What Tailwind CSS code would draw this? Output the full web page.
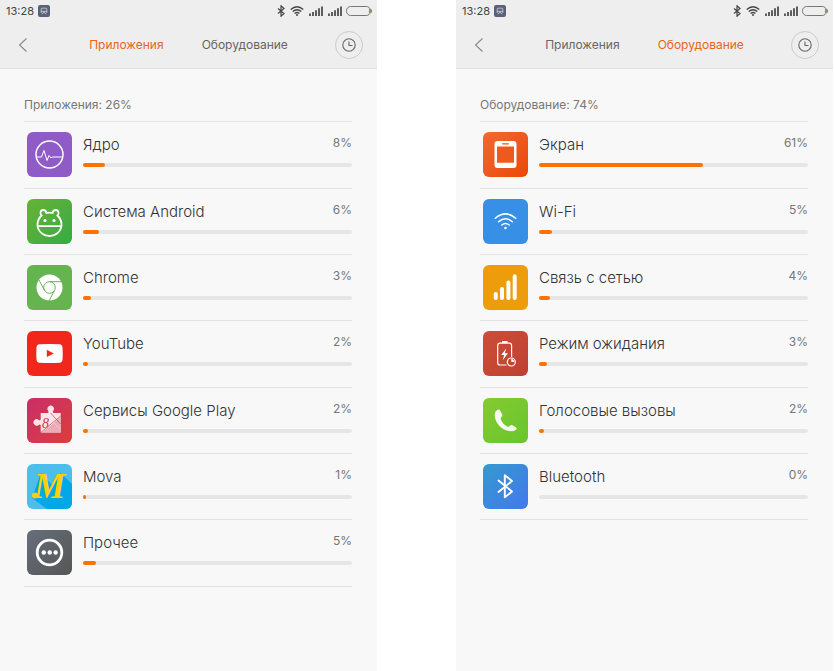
<!DOCTYPE html>
<html lang="ru">
<head>
    <meta charset="UTF-8">
    <meta name="viewport" content="width=device-width, initial-scale=1.0">
    <title>Расход заряда</title>
    <script src="https://cdn.jsdelivr.net/npm/@tailwindcss/browser@4"></script>
</head>
<body class="bg-white font-['Inter','Noto_Sans',sans-serif] text-[#333]">
    <!-- Shared icons -->
    <svg class="hidden" aria-hidden="true">
        <symbol id="i-app" viewBox="0 0 12 12">
            <rect width="12" height="12" rx="2" fill="#596178"/>
            <path d="M3.200 8V4.200q0-1 1-1h3.600q1 0 1 1V8M3.200 6.300h5.600M4 9.300l2-2.500 2 2.500" fill="none" stroke="#d5d8e0" stroke-width=".8"/>
        </symbol>
        <symbol id="i-bt" viewBox="0 0 8 12">
            <path d="M1 3.500l6 5L4 11.200V.8l3 2.700-6 5" fill="none" stroke="#444" stroke-width="1.200"/>
        </symbol>
        <symbol id="i-wifi" viewBox="0 0 14 10">
            <path d="M.7 3.600Q7-2 13.300 3.600M2.700 5.600q4.300-3.700 8.600 0M4.600 7.500q2.400-2 4.800 0" fill="none" stroke="#444" stroke-width="1.300"/>
            <circle cx="7" cy="9" r="1" fill="#444"/>
        </symbol>
        <symbol id="i-signal" viewBox="0 0 14 10">
            <path d="M1 7.500V10M4 6v4M7 4.200V10M10 2.300V10M13 .5V10" fill="none" stroke="#444" stroke-width="1.700"/>
        </symbol>
        <symbol id="i-battery" viewBox="0 0 26 10">
            <rect x=".5" y=".5" width="24" height="9" rx="4.200" fill="none" stroke="#777"/>
            <path d="M23.500 3v4" stroke="#e66" stroke-width="1.200"/>
            <path d="M25.400 3.500v3" stroke="#777"/>
        </symbol>
        <symbol id="i-back" viewBox="0 0 10 16">
            <path d="M8.500 1.500L1.500 8l7 6.500" fill="none" stroke="#888" stroke-width="1.100"/>
        </symbol>
        <symbol id="i-clock" viewBox="0 0 14 14">
            <circle cx="7" cy="7" r="6.200" fill="none" stroke="#666" stroke-width="1.100"/>
            <path d="M7 3.500V7.500h3.500" fill="none" stroke="#666" stroke-width="1.100"/>
        </symbol>
    </svg>

    <div class="grid min-h-screen grid-cols-2 gap-x-[79px] pr-px">
        <!-- Apps -->
        <main class="bg-[#f8f8f8]">
            <header class="border-b border-[#dfdfdf] bg-[#eee]">
                <div class="flex h-[22px] items-center pr-[5px] pl-[6px]">
                    <span class="text-[11px] leading-4 text-[#444]">13:28</span>
                    <svg class="ml-1 size-3"><use href="#i-app"/></svg>
                    <svg class="ml-auto h-3 w-2"><use href="#i-bt"/></svg>
                    <svg class="ml-[5px] h-2.5 w-3.5"><use href="#i-wifi"/></svg>
                    <svg class="ml-[5px] h-2.5 w-3.5"><use href="#i-signal"/></svg>
                    <svg class="ml-[5px] h-2.5 w-3.5"><use href="#i-signal"/></svg>
                    <svg class="ml-1 h-2.5 w-[26px]"><use href="#i-battery"/></svg>
                </div>
                <nav class="flex h-[46px] items-center justify-between px-3.5">
                    <button class="flex size-7 items-center pl-1" aria-label="Назад"><svg class="h-4 w-2.5"><use href="#i-back"/></svg></button>
                    <div class="flex gap-[38px] text-xs leading-5">
                        <button class="text-[#e8651a]">Приложения</button>
                        <button class="text-[#666]">Оборудование</button>
                    </div>
                    <button class="flex size-7 items-center justify-center rounded-full border border-[#ccc]" aria-label="История"><svg class="size-3.5"><use href="#i-clock"/></svg></button>
                </nav>
            </header>
            <section class="pr-[25px] pl-6">
                <h2 class="border-b border-[#e4e4e4] pt-[26px] pb-1.5 text-xs leading-5 text-[#777]">Приложения: 26%</h2>
                <ul>
                    <li class="flex gap-[11px] border-b border-[#e4e4e4] py-2.5 pl-[3px] nth-[3n+1]:pb-[11px]">
                        <svg class="size-[45px] shrink-0 rounded-md bg-[#8f5bc6]" viewBox="0 0 45 45" fill="none" stroke="#fff">
                            <circle cx="22.500" cy="22.500" r="13.500" stroke-width="1.500"/>
                            <path d="M9 25h5.500L17 18.500l3 10 2-5 2.200 2.500 1-1H36" stroke-width="1"/>
                        </svg>
                        <div class="flex-1">
                            <div class="flex justify-between pt-px">
                                <span class="text-[15px] leading-6 font-light">Ядро</span>
                                <span class="text-xs leading-5 text-[#777]">8%</span>
                            </div>
                            <div class="mt-1.5 h-1 rounded-full bg-[#e6e6e6]"><div class="h-1 rounded-full bg-[#ff7200]" style="width: 8%"></div></div>
                        </div>
                    </li>
                    <li class="flex gap-[11px] border-b border-[#e4e4e4] py-2.5 pl-[3px] nth-[3n+1]:pb-[11px]">
                        <svg class="size-[45px] shrink-0 rounded-md bg-linear-to-br from-[#67b236] to-[#32ab43]" viewBox="0 0 45 45" fill="none" stroke="#fff" stroke-width="1.800">
                            <path d="M14.500 16.500C12.500 15 13.500 11 16 11c2 0 3.200 1.200 3.500 3q3-.8 6 0c.3-1.800 1.500-3 3.500-3 2.500 0 3.500 4 1.500 5.500q4 4 4 9c0 6.500-5.300 11.500-12 11.500s-12-5-12-11.500q0-5 4-9zM11 27.200h23"/>
                            <g fill="#fff" stroke="none"><circle cx="18" cy="21.500" r="1.600"/><circle cx="27" cy="21.500" r="1.600"/></g>
                        </svg>
                        <div class="flex-1">
                            <div class="flex justify-between pt-px">
                                <span class="text-[15px] leading-6 font-light">Система Android</span>
                                <span class="text-xs leading-5 text-[#777]">6%</span>
                            </div>
                            <div class="mt-1.5 h-1 rounded-full bg-[#e6e6e6]"><div class="h-1 rounded-full bg-[#ff7200]" style="width: 6%"></div></div>
                        </div>
                    </li>
                    <li class="flex gap-[11px] border-b border-[#e4e4e4] py-2.5 pl-[3px] nth-[3n+1]:pb-[11px]">
                        <svg class="size-[45px] shrink-0 rounded-md bg-[#65b44f]" viewBox="0 0 45 45" fill="none" stroke="#65b44f">
                            <circle cx="22.500" cy="22.500" r="13" fill="#fff" stroke="none"/>
                            <circle cx="22.500" cy="22.500" r="5.800"/>
                            <path d="M22.500 16.700h12M12 15l5.500 10.400M27.500 25.400L22 36"/>
                        </svg>
                        <div class="flex-1">
                            <div class="flex justify-between pt-px">
                                <span class="text-[15px] leading-6 font-light">Chrome</span>
                                <span class="text-xs leading-5 text-[#777]">3%</span>
                            </div>
                            <div class="mt-1.5 h-1 rounded-full bg-[#e6e6e6]"><div class="h-1 rounded-full bg-[#ff7200]" style="width: 3%"></div></div>
                        </div>
                    </li>
                    <li class="flex gap-[11px] border-b border-[#e4e4e4] py-2.5 pl-[3px] nth-[3n+1]:pb-[11px]">
                        <svg class="size-[45px] shrink-0 rounded-md bg-[#f1271b]" viewBox="0 0 45 45">
                            <path d="M12.500 13.300q10-.8 20 0 3 .2 3 3.200.5 6 0 12 0 3-3 3.200-10 .6-20 0-3-.2-3-3.200-.5-6 0-12 0-3 3-3.200z" fill="#fff"/>
                            <path d="M19.800 18.800v7.200l7-3.600z" fill="#f1271b"/>
                        </svg>
                        <div class="flex-1">
                            <div class="flex justify-between pt-px">
                                <span class="text-[15px] leading-6 font-light">YouTube</span>
                                <span class="text-xs leading-5 text-[#777]">2%</span>
                            </div>
                            <div class="mt-1.5 h-1 rounded-full bg-[#e6e6e6]"><div class="h-1 rounded-full bg-[#ff7200]" style="width: 2%"></div></div>
                        </div>
                    </li>
                    <li class="flex gap-[11px] border-b border-[#e4e4e4] py-2.5 pl-[3px] nth-[3n+1]:pb-[11px]">
                        <svg class="size-[45px] shrink-0 rounded-md bg-linear-to-br from-[#c92d68] to-[#dc3d39]" viewBox="0 0 45 45">
                            <path d="M13.700 15H21q1-.8.300-2a3.200 3.200 0 1 1 4.800 0q-.7 1.200.300 2h7.300v19.500h-20v-7.300q-.8-1-2-.3a3.200 3.200 0 1 1 0-5q1.200.7 2-.3z" fill="#fce4e8"/>
                            <path d="M33.700 18.500L27 24.500l6.700 7zM27 25L14.500 34.500h19.200v-2.500z" fill="#ecabb7"/>
                            <path d="M23.500 15L33.700 26M13.700 34.500l20-16.500" stroke="#d33654" stroke-width=".7"/>
                            <text x="15" y="29.500" font-family="Liberation Serif" font-size="14" font-style="italic" fill="#d0335b">8</text>
                        </svg>
                        <div class="flex-1">
                            <div class="flex justify-between pt-px">
                                <span class="text-[15px] leading-6 font-light">Сервисы Google Play</span>
                                <span class="text-xs leading-5 text-[#777]">2%</span>
                            </div>
                            <div class="mt-1.5 h-1 rounded-full bg-[#e6e6e6]"><div class="h-1 rounded-full bg-[#ff7200]" style="width: 2%"></div></div>
                        </div>
                    </li>
                    <li class="flex gap-[11px] border-b border-[#e4e4e4] py-2.5 pl-[3px] nth-[3n+1]:pb-[11px]">
                        <svg class="size-[45px] shrink-0 rounded-md bg-[#4dbdec]" viewBox="0 0 45 45">
                            <path d="M5 34l15 11h25V20L33.500 9 26 22 14 9z" fill="#00a8e8"/>
                            <text x="7" y="34" font-family="Liberation Serif" font-size="35" font-weight="700" font-style="italic" fill="#fdcf0b">M</text>
                            <circle cx="8" cy="31.500" r="3" fill="#fdcf0b"/>
                        </svg>
                        <div class="flex-1">
                            <div class="flex justify-between pt-px">
                                <span class="text-[15px] leading-6 font-light">Mova</span>
                                <span class="text-xs leading-5 text-[#777]">1%</span>
                            </div>
                            <div class="mt-1.5 h-1 rounded-full bg-[#e6e6e6]"><div class="h-1 rounded-full bg-[#ff7200]" style="width: 1%"></div></div>
                        </div>
                    </li>
                    <li class="flex gap-[11px] border-b border-[#e4e4e4] py-2.5 pl-[3px] nth-[3n+1]:pb-[11px]">
                        <svg class="size-[45px] shrink-0 rounded-md bg-linear-to-br from-[#656e7a] to-[#565656]" viewBox="0 0 45 45" fill="#fff">
                            <circle cx="22.500" cy="22.500" r="12.300" fill="none" stroke="#fff" stroke-width="2.800"/>
                            <circle cx="16.800" cy="22.500" r="2.200"/><circle cx="22.700" cy="22.500" r="2.200"/><circle cx="28.600" cy="22.500" r="2.200"/>
                        </svg>
                        <div class="flex-1">
                            <div class="flex justify-between pt-px">
                                <span class="text-[15px] leading-6 font-light">Прочее</span>
                                <span class="text-xs leading-5 text-[#777]">5%</span>
                            </div>
                            <div class="mt-1.5 h-1 rounded-full bg-[#e6e6e6]"><div class="h-1 rounded-full bg-[#ff7200]" style="width: 5%"></div></div>
                        </div>
                    </li>
                </ul>
            </section>
        </main>

        <!-- Hardware -->
        <main class="bg-[#f8f8f8]">
            <header class="border-b border-[#dfdfdf] bg-[#eee]">
                <div class="flex h-[22px] items-center pr-[5px] pl-[6px]">
                    <span class="text-[11px] leading-4 text-[#444]">13:28</span>
                    <svg class="ml-1 size-3"><use href="#i-app"/></svg>
                    <svg class="ml-auto h-3 w-2"><use href="#i-bt"/></svg>
                    <svg class="ml-[5px] h-2.5 w-3.5"><use href="#i-wifi"/></svg>
                    <svg class="ml-[5px] h-2.5 w-3.5"><use href="#i-signal"/></svg>
                    <svg class="ml-[5px] h-2.5 w-3.5"><use href="#i-signal"/></svg>
                    <svg class="ml-1 h-2.5 w-[26px]"><use href="#i-battery"/></svg>
                </div>
                <nav class="flex h-[46px] items-center justify-between px-3.5">
                    <button class="flex size-7 items-center pl-1" aria-label="Назад"><svg class="h-4 w-2.5"><use href="#i-back"/></svg></button>
                    <div class="flex gap-[38px] text-xs leading-5">
                        <button class="text-[#666]">Приложения</button>
                        <button class="text-[#e8651a]">Оборудование</button>
                    </div>
                    <button class="flex size-7 items-center justify-center rounded-full border border-[#ccc]" aria-label="История"><svg class="size-3.5"><use href="#i-clock"/></svg></button>
                </nav>
            </header>
            <section class="pr-[25px] pl-6">
                <h2 class="border-b border-[#e4e4e4] pt-[26px] pb-1.5 text-xs leading-5 text-[#777]">Оборудование: 74%</h2>
                <ul>
                    <li class="flex gap-[11px] border-b border-[#e4e4e4] py-2.5 pl-[3px] nth-[3n+1]:pb-[11px]">
                        <svg class="size-[45px] shrink-0 rounded-md bg-linear-to-br from-[#f1692f] to-[#ea4700]" viewBox="0 0 45 45">
                            <rect x="11.500" y="9" width="22" height="27" rx="3" fill="#fff"/>
                            <path d="M14 14.500h17v16.300H14z" fill="#ee5a1b"/>
                            <path d="M19.500 11.800h6" stroke="#ee5a1b" stroke-width="1.200" stroke-linecap="round"/>
                        </svg>
                        <div class="flex-1">
                            <div class="flex justify-between pt-px">
                                <span class="text-[15px] leading-6 font-light">Экран</span>
                                <span class="text-xs leading-5 text-[#777]">61%</span>
                            </div>
                            <div class="mt-1.5 h-1 rounded-full bg-[#e6e6e6]"><div class="h-1 rounded-full bg-[#ff7200]" style="width: 61%"></div></div>
                        </div>
                    </li>
                    <li class="flex gap-[11px] border-b border-[#e4e4e4] py-2.5 pl-[3px] nth-[3n+1]:pb-[11px]">
                        <svg class="size-[45px] shrink-0 rounded-md bg-[#388fe6]" viewBox="0 0 45 45" fill="none" stroke="#fff" stroke-width="1.500" stroke-linecap="round">
                            <path d="M12.300 19.300q10.200-8.800 20.400 0M15.600 22.700q6.900-5.800 13.800 0M18.800 26q3.700-3 7.400 0"/>
                            <circle cx="22.500" cy="29" r="1.300" fill="#fff" stroke="none"/>
                        </svg>
                        <div class="flex-1">
                            <div class="flex justify-between pt-px">
                                <span class="text-[15px] leading-6 font-light">Wi-Fi</span>
                                <span class="text-xs leading-5 text-[#777]">5%</span>
                            </div>
                            <div class="mt-1.5 h-1 rounded-full bg-[#e6e6e6]"><div class="h-1 rounded-full bg-[#ff7200]" style="width: 5%"></div></div>
                        </div>
                    </li>
                    <li class="flex gap-[11px] border-b border-[#e4e4e4] py-2.5 pl-[3px] nth-[3n+1]:pb-[11px]">
                        <svg class="size-[45px] shrink-0 rounded-md bg-[#ed9d0c]" viewBox="0 0 45 45">
                            <path d="M12.700 29v4M19 24v9M25.400 17.500V33M31.700 11.300V33" stroke="#fff" stroke-width="4" stroke-linecap="round"/>
                        </svg>
                        <div class="flex-1">
                            <div class="flex justify-between pt-px">
                                <span class="text-[15px] leading-6 font-light">Связь с сетью</span>
                                <span class="text-xs leading-5 text-[#777]">4%</span>
                            </div>
                            <div class="mt-1.5 h-1 rounded-full bg-[#e6e6e6]"><div class="h-1 rounded-full bg-[#ff7200]" style="width: 4%"></div></div>
                        </div>
                    </li>
                    <li class="flex gap-[11px] border-b border-[#e4e4e4] py-2.5 pl-[3px] nth-[3n+1]:pb-[11px]">
                        <svg class="size-[45px] shrink-0 rounded-md bg-linear-to-br from-[#cb4f36] to-[#bf4032]" viewBox="0 0 45 45" fill="none" stroke="#fff" stroke-width="1.200">
                            <path d="M23.500 34H17q-2.300 0-2.300-2.300V14.500q0-2.300 2.300-2.300h9.300q2.300 0 2.300 2.300V26"/>
                            <path d="M19 11h5.500" stroke-width="2"/>
                            <path d="M23.200 17.500l-5 6.500h3l-1.500 5.200 5.300-7h-3.200z" fill="#fff" stroke="none"/>
                            <circle cx="28.300" cy="31" r="4"/>
                            <path d="M28.300 28v3h3a3 3 0 0 0-3-3z" fill="#fff" stroke="none"/>
                        </svg>
                        <div class="flex-1">
                            <div class="flex justify-between pt-px">
                                <span class="text-[15px] leading-6 font-light">Режим ожидания</span>
                                <span class="text-xs leading-5 text-[#777]">3%</span>
                            </div>
                            <div class="mt-1.5 h-1 rounded-full bg-[#e6e6e6]"><div class="h-1 rounded-full bg-[#ff7200]" style="width: 3%"></div></div>
                        </div>
                    </li>
                    <li class="flex gap-[11px] border-b border-[#e4e4e4] py-2.5 pl-[3px] nth-[3n+1]:pb-[11px]">
                        <svg class="size-[45px] shrink-0 rounded-md bg-linear-to-br from-[#85ca31] to-[#67c62c]" viewBox="0 0 45 45">
                            <path d="M14.500 11.800q1.800-.8 2.800 1l1.800 3.500q.8 1.600-.7 2.800-1 .8-.6 2.200 1.800 5 6.800 7.400 1.300.5 2.100-.6 1.200-1.600 2.800-.8l3.300 2q1.400 1 .4 2.300-1.700 2-5.200 1.700C18 32.500 11.300 24 11.700 16q.2-3 2.800-4.200z" fill="#f4faf0"/>
                        </svg>
                        <div class="flex-1">
                            <div class="flex justify-between pt-px">
                                <span class="text-[15px] leading-6 font-light">Голосовые вызовы</span>
                                <span class="text-xs leading-5 text-[#777]">2%</span>
                            </div>
                            <div class="mt-1.5 h-1 rounded-full bg-[#e6e6e6]"><div class="h-1 rounded-full bg-[#ff7200]" style="width: 2%"></div></div>
                        </div>
                    </li>
                    <li class="flex gap-[11px] border-b border-[#e4e4e4] py-2.5 pl-[3px] nth-[3n+1]:pb-[11px]">
                        <svg class="size-[45px] shrink-0 rounded-md bg-linear-to-br from-[#3599cc] to-[#4476ef]" viewBox="0 0 45 45">
                            <path d="M15.500 16.500l13.500 11-7.200 5.800V11.200l7.200 5.800-13.500 11" fill="none" stroke="#fff" stroke-width="1.900" stroke-linecap="round" stroke-linejoin="round"/>
                        </svg>
                        <div class="flex-1">
                            <div class="flex justify-between pt-px">
                                <span class="text-[15px] leading-6 font-light">Bluetooth</span>
                                <span class="text-xs leading-5 text-[#777]">0%</span>
                            </div>
                            <div class="mt-1.5 h-1 rounded-full bg-[#e6e6e6]"><div class="h-1 rounded-full bg-[#ff7200]" style="width: 0%"></div></div>
                        </div>
                    </li>
                </ul>
            </section>
        </main>
    </div>
</body>
</html>
